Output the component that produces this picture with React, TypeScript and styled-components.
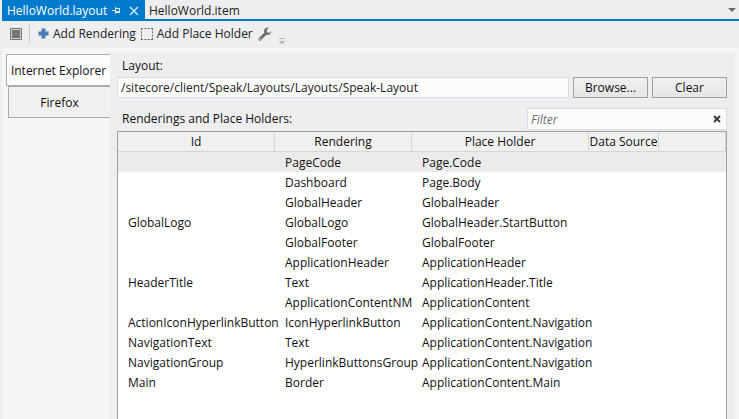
import React, { useState } from "react";
import styled, { createGlobalStyle } from "styled-components";

const GlobalStyle = createGlobalStyle`
  * { box-sizing: border-box; }
  body { margin: 0; background: #eeeef0; }
  body, button, input, table {
    font-family: "Open Sans", "Noto Sans", sans-serif;
    font-size: 12px;
    line-height: 16px;
    color: #111;
  }
  button { margin: 0; padding: 0; border: 0; background: none; }
`;

const Page = styled.div`
  min-height: 100vh;
  display: flex;
  flex-direction: column;
  background: #eeeef0;
`;

const DocumentTabs = styled.div`
  display: flex;
  align-items: stretch;
  height: 21px;
  margin-left: 2px;
  padding-right: 2px;
  border-bottom: 2px solid #007acc;
`;

const ActiveTab = styled.div`
  display: flex;
  align-items: center;
  width: 143px;
  padding: 2px 4px 0 5px;
  background: #007acc;
`;

const TabTitle = styled.button<{ $active?: boolean }>`
  color: ${(p) => (p.$active ? "#fff" : "#222")};
  padding: ${(p) => (p.$active ? "0" : "2px 0 0 4px")};
  text-align: left;
  white-space: nowrap;
  flex: ${(p) => (p.$active ? "1" : "none")};
`;

const GlyphButton = styled.button`
  display: flex;
  align-items: center;
  justify-content: center;
  width: 18px;
  flex: none;
`;

const TabList = styled(GlyphButton)`
  width: 10px;
  margin-left: auto;
`;

const Toolbar = styled.div`
  display: flex;
  align-items: center;
  height: 27px;
  margin-left: 2px;
  padding: 0 8px 2px;
`;

const Separator = styled.span`
  width: 1px;
  height: 18px;
  margin: 0 8px 0 7px;
  background: #c6c8cc;
`;

const ToolButton = styled.button`
  display: flex;
  align-items: center;
  gap: 4px;
  margin-right: 5px;
  color: #222;
  white-space: nowrap;
`;

const IconTool = styled(ToolButton)`
  margin-right: 0;
`;

const Overflow = styled(GlyphButton)`
  width: 8px;
  height: 8px;
  margin: 14px 0 0 6px;
`;

const Workspace = styled.div`
  flex: 1;
  display: flex;
  margin-left: 2px;
  padding: 4px 4px 0 4px;
  background: #f5f5f5;
`;

const DeviceTabs = styled.div`
  display: flex;
  flex-direction: column;
  align-items: flex-end;
  width: 104px;
  flex: none;
  padding-top: 2px;
`;

const DeviceTab = styled.button<{ $active?: boolean }>`
  width: ${(p) => (p.$active ? "104px" : "102px")};
  height: 32px;
  padding-top: 2px;
  border: 1px solid #acacac;
  border-right: 0;
  background: ${(p) => (p.$active ? "#fcfcfc" : "#f0f0f0")};
  white-space: nowrap;
`;

const Panel = styled.main`
  flex: 1;
  min-width: 0;
  display: flex;
  flex-direction: column;
  padding: 6px 8px 0 7px;
  background: #eeeef0;
`;

const FieldLabel = styled.label`
  padding-left: 5px;
`;

const PathRow = styled.div`
  display: flex;
  gap: 4px;
  margin-top: 3px;
`;

const TextBox = styled.input`
  flex: 1;
  min-width: 0;
  height: 21px;
  padding: 0 3px;
  border: 1px solid #d9dae6;
  background: #fcfcfc;
  color: #222;
  outline: 0;
`;

const PushButton = styled.button`
  width: 75px;
  height: 21px;
  border: 1px solid #a0a0a0;
  background: linear-gradient(#f0f0f0, #e5e5e5);
`;

const FilterRow = styled.div`
  display: flex;
  align-items: center;
  justify-content: space-between;
  height: 22px;
  margin: 10px 0 1px;
`;

const FilterBox = styled.div`
  display: flex;
  width: 200px;
  height: 22px;
  border: 1px solid #d9dae6;
  background: #fcfcfc;
`;

const FilterInput = styled.input`
  flex: 1;
  min-width: 0;
  padding: 2px 3px 0;
  border: 0;
  outline: 0;
  background: none;
  &::placeholder { color: #6d6d6d; font-style: italic; opacity: 1; }
`;

const GridFrame = styled.div`
  flex: 1;
  border: 1px solid #a0a0a0;
  border-bottom: 0;
  background: #fff;
`;

const Grid = styled.table`
  width: 100%;
  table-layout: fixed;
  border-collapse: separate;
  border-spacing: 0;
`;

const Column = styled.col<{ $width?: number }>`
  width: ${(p) => (p.$width ? `${p.$width}px` : "auto")};
`;

const HeaderCell = styled.th`
  height: 20px;
  padding: 1px 0 0;
  border-right: 1px solid #d5d5d5;
  border-bottom: 1px solid #d5d5d5;
  background: #f0f0f0;
  font-weight: 400;
  white-space: nowrap;
`;

const Row = styled.tr<{ $selected?: boolean }>`
  background: ${(p) => (p.$selected ? "#ebebeb" : "#fff")};
`;

const Cell = styled.td`
  height: 20px;
  padding: 2px 0 0 10px;
  white-space: nowrap;
`;

const columns = [
  { title: "Id", width: 157 },
  { title: "Rendering", width: 137 },
  { title: "Place Holder", width: 177 },
  { title: "Data Source", width: 70 },
  { title: "" },
];

const rows = [
  ["", "PageCode", "Page.Code"],
  ["", "Dashboard", "Page.Body"],
  ["", "GlobalHeader", "GlobalHeader"],
  ["GlobalLogo", "GlobalLogo", "GlobalHeader.StartButton"],
  ["", "GlobalFooter", "GlobalFooter"],
  ["", "ApplicationHeader", "ApplicationHeader"],
  ["HeaderTitle", "Text", "ApplicationHeader.Title"],
  ["", "ApplicationContentNM", "ApplicationContent"],
  ["ActionIconHyperlinkButton", "IconHyperlinkButton", "ApplicationContent.Navigation"],
  ["NavigationText", "Text", "ApplicationContent.Navigation"],
  ["NavigationGroup", "HyperlinkButtonsGroup", "ApplicationContent.Navigation"],
  ["Main", "Border", "ApplicationContent.Main"],
];

const PinIcon = () => (
  <svg width="9" height="8" viewBox="0 0 9 8" shapeRendering="crispEdges" fill="#d4e9f8">
    <path d="M0 3h3v1H0zM3 0h1v7H3zM4 1h4v1H4zM4 4h4v2H4zM7 1h1v5H7z" />
  </svg>
);

const CloseIcon = () => (
  <svg width="10" height="10" viewBox="0 0 10 10" stroke="#d4e9f8" strokeWidth="1.4">
    <path d="M1 1l8 8M9 1L1 9" />
  </svg>
);

const LayoutIcon = () => (
  <svg width="12" height="12" viewBox="0 0 12 12">
    <rect width="12" height="12" rx="1" fill="#757575" />
    <rect x="1.5" y="1.5" width="9" height="9" fill="none" stroke="#d0d0d0" />
  </svg>
);

const PlusIcon = () => (
  <svg width="11" height="11" viewBox="0 0 11 11" fill="#4a7db5">
    <path d="M3.5.5h4v3h3v4h-3v3h-4v-3h-3v-4h3z" />
  </svg>
);

const PlaceholderIcon = () => (
  <svg width="12" height="12" viewBox="0 0 12 12" fill="none" stroke="#666">
    <path d="M0 .5h12M0 11.5h12M.5 0v12M11.5 0v12" strokeDasharray="2 1.3" />
  </svg>
);

const WrenchIcon = () => (
  <svg width="14" height="14" viewBox="0 0 14 14">
    <path d="M1.9 12.1L8 6" stroke="#707070" strokeWidth="3" strokeLinecap="round" />
    <path
      d="M10.9.6A3.8 3.8 0 0 0 6 4.6c.1 2.1 1.9 3.5 3.8 3.4 2 0 3.5-1.5 3.7-3.9l-2.2 1.8-2.1-.7-.5-2z"
      fill="#707070"
    />
    <circle cx="2" cy="12" r=".7" fill="#eeeef0" />
  </svg>
);

const OverflowIcon = () => (
  <svg width="6" height="6" viewBox="0 0 6 6" fill="#b8b8b8" shapeRendering="crispEdges">
    <path d="M0 0h6v1H0zM0 3h6v1H5v1H4v1H2V5H1V4H0z" />
  </svg>
);

const ArrowIcon = () => (
  <svg width="8" height="4" viewBox="0 0 8 4" fill="#6b6b6b">
    <path d="M0 0h8L4 4z" />
  </svg>
);

const ClearIcon = () => (
  <svg width="8" height="8" viewBox="0 0 8 8" stroke="#333" strokeWidth="1.8">
    <path d="M1 1l6 6M7 1L1 7" />
  </svg>
);

export default function App() {
  const [path, setPath] = useState("/sitecore/client/Speak/Layouts/Layouts/Speak-Layout");
  const [filter, setFilter] = useState("");
  const needle = filter.toLowerCase();
  const visible = rows.filter((r) => r.some((c) => c.toLowerCase().includes(needle)));

  return (
    <Page>
      <GlobalStyle />
      <DocumentTabs>
        <ActiveTab>
          <TabTitle $active>HelloWorld.layout</TabTitle>
          <GlyphButton aria-label="Pin tab"><PinIcon /></GlyphButton>
          <GlyphButton aria-label="Close tab"><CloseIcon /></GlyphButton>
        </ActiveTab>
        <TabTitle>HelloWorld.item</TabTitle>
        <TabList aria-label="Open documents"><ArrowIcon /></TabList>
      </DocumentTabs>
      <Toolbar>
        <IconTool aria-label="Layout"><LayoutIcon /></IconTool>
        <Separator />
        <ToolButton><PlusIcon />Add Rendering</ToolButton>
        <ToolButton><PlaceholderIcon />Add Place Holder</ToolButton>
        <IconTool aria-label="Settings"><WrenchIcon /></IconTool>
        <Overflow aria-label="More"><OverflowIcon /></Overflow>
      </Toolbar>
      <Workspace>
        <DeviceTabs>
          <DeviceTab $active>Internet Explorer</DeviceTab>
          <DeviceTab>Firefox</DeviceTab>
        </DeviceTabs>
        <Panel>
          <FieldLabel htmlFor="layout-path">Layout:</FieldLabel>
          <PathRow>
            <TextBox id="layout-path" value={path} onChange={(e) => setPath(e.target.value)} />
            <PushButton>Browse...</PushButton>
            <PushButton onClick={() => setPath("")}>Clear</PushButton>
          </PathRow>
          <FilterRow>
            <FieldLabel htmlFor="filter">Renderings and Place Holders:</FieldLabel>
            <FilterBox>
              <FilterInput
                id="filter"
                placeholder="Filter"
                value={filter}
                onChange={(e) => setFilter(e.target.value)}
              />
              <GlyphButton aria-label="Clear filter" onClick={() => setFilter("")}>
                <ClearIcon />
              </GlyphButton>
            </FilterBox>
          </FilterRow>
          <GridFrame>
            <Grid>
              <colgroup>
                {columns.map((c, i) => <Column key={i} $width={c.width} />)}
              </colgroup>
              <thead>
                <tr>
                  {columns.map((c, i) => <HeaderCell key={i} scope="col">{c.title}</HeaderCell>)}
                </tr>
              </thead>
              <tbody>
                {visible.map((r, i) => (
                  <Row key={i} $selected={i === 0}>
                    {columns.map((_, j) => <Cell key={j}>{r[j] ?? ""}</Cell>)}
                  </Row>
                ))}
              </tbody>
            </Grid>
          </GridFrame>
        </Panel>
      </Workspace>
    </Page>
  );
}
